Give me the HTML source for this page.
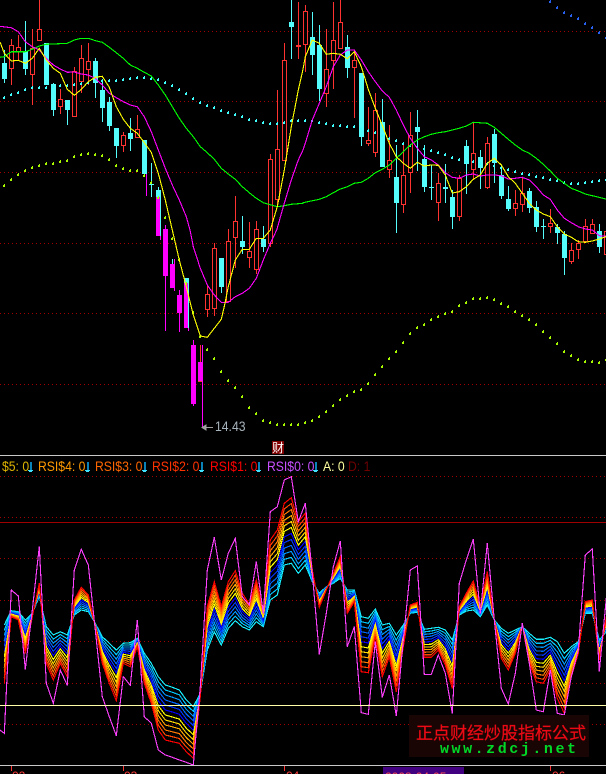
<!DOCTYPE html>
<html><head><meta charset="utf-8"><style>
html,body{margin:0;padding:0;background:#000;width:606px;height:774px;overflow:hidden}
svg{display:block;position:absolute;left:0;top:0}
text{font-family:"Liberation Sans","Noto Sans CJK SC",sans-serif}
</style></head><body>
<svg id="s" width="606" height="774" viewBox="0 0 606 774" xmlns="http://www.w3.org/2000/svg">
<g id="g" shape-rendering="crispEdges"></g>
<path d="M213 427.5H203M206 425L202 427.5L206 430Z" stroke="#a0a0a0" fill="#a0a0a0"/>
<text transform="translate(215,431) scale(1,1.1)" font-size="12.2" fill="#a8b4bc">14.43</text>
<rect x="272" y="441" width="12" height="13" fill="#800000"/>
<text x="272" y="452" font-size="12" fill="#fff">财</text>
<g font-size="12.2">
<text transform="translate(2,471) scale(1,1.15)" fill="#e0b400">$5: 0</text>
<text transform="translate(38,471) scale(1,1.15)" fill="#ff9900">RSI$4: 0</text>
<text transform="translate(95,471) scale(1,1.15)" fill="#ff6600">RSI$3: 0</text>
<text transform="translate(152,471) scale(1,1.15)" fill="#ff3300">RSI$2: 0</text>
<text transform="translate(210,471) scale(1,1.15)" fill="#ff0000">RSI$1: 0</text>
<text transform="translate(267,471) scale(1,1.15)" fill="#c850ff">RSI$0: 0</text>
<text transform="translate(323,471) scale(1,1.15)" fill="#ffffa0">A: 0</text>
<text transform="translate(348,471) scale(1,1.15)" fill="#700000">D: 1</text>
</g>
<g shape-rendering="crispEdges">
<path fill="#0a84b8" d="M30 462h2v8h-2zM87 462h2v8h-2zM144 462h2v8h-2zM201 462h2v8h-2zM258 462h2v8h-2zM315 462h2v8h-2z"/>
<path fill="#40e0ff" d="M28 470h5v1h-5zM29 471h3v1h-3zM85 470h5v1h-5zM86 471h3v1h-3zM142 470h5v1h-5zM143 471h3v1h-3zM199 470h5v1h-5zM200 471h3v1h-3zM256 470h5v1h-5zM257 471h3v1h-3zM313 470h5v1h-5zM314 471h3v1h-3z"/>
</g>
<rect x="409" y="715" width="180" height="42" fill="#1a0505"/>
<text x="416" y="739" font-size="17" fill="#f00a14" stroke="#d00a14" stroke-width=".3">正点财经炒股指标公式</text>
<text x="440" y="753" font-size="15" font-weight="bold" fill="#00d828" style="font-family:'Liberation Mono',monospace" textLength="136" lengthAdjust="spacing">www.zdcj.net</text>
<rect x="383" y="767" width="81" height="7" fill="#400080"/>
<g font-size="12" fill="#ff3c3c">
<text x="12" y="780">02</text><text x="124" y="780">03</text><text x="286" y="780">04</text><text x="552" y="780">06</text>
<text x="385" y="781" fill="#ff5050">2008-04-05</text>
</g>
</svg>
<script>
var h='';
function R(x,y,w,ht,c){h+='<rect x="'+x+'" y="'+y+'" width="'+w+'" height="'+ht+'" fill="'+c+'"/>';}
function D(y,c){h+='<path d="M0 '+(y+.5)+'H606" stroke="'+c+'" stroke-dasharray="1 3"/>';}
[31,101,172,243,313,384,476,517,558,600,641,683,724].forEach(function(y){D(y,'#a00000');});
var CY='#54fcfc',RD='#ff3232',MG='#ff00ff';
var C=[['c',50,63,79,83],['r',39,45,68,85],['r',35,47,51,60],['c',21,51,69,75],['r',29,48,74,105],['r',-2,29,40,40],['c',43,43,85,85],['c',83,84,110,116],['r',89,99,106,114],['c',100,100,110,125],['r',67,71,116,116],['r',45,58,81,93],['r',43,61,69,85],['c',58,61,83,98],['c',79,90,108,122],['c',97,102,126,131],['c',128,128,146,158],['r',132,135,145,152],['c',118,133,139,151],['r',115,129,137,137],['c',140,140,174,174],['c',163,184,185,197],['c',187,190,236,236],['m',225,229,276,331],['c',259,264,288,288],['m',290,295,313,332],['c',278,278,328,328],['m',340,345,404,406],['r',345,362,381,381],['r',285,294,309,317],['r',243,248,308,316],['c',258,258,287,293],['r',229,241,301,301],['r',196,221,237,268],['c',216,241,247,254],['r',222,251,257,268],['r',221,229,269,274],['c',226,239,247,252],['r',154,159,243,247],['r',90,149,199,205],['r',43,60,160,160],['c',0,22,27,59],['r',2,45,46,59],['r',5,11,44,72],['c',12,37,55,75],['c',25,45,89,101],['r',29,69,93,107],['r',2,40,60,89],['r',0,22,48,49],['c',35,47,68,78],['r',50,60,67,118],['c',73,73,137,146],['r',107,140,143,146],['r',93,110,152,157],['c',99,122,167,167],['r',125,160,169,178],['c',145,177,203,233],['r',145,175,204,213],['r',112,135,172,193],['c',110,127,132,171],['c',145,159,187,192],['c',165,187,188,200],['r',173,183,202,221],['c',164,187,189,203],['c',190,197,217,229],['r',175,178,216,221],['c',140,146,164,194],['r',123,153,169,180],['c',150,157,168,189],['r',137,143,187,189],['c',129,134,163,183],['c',166,175,196,199],['c',186,199,209,211],['r',190,203,208,216],['r',178,193,204,212],['c',188,191,208,213],['c',201,207,227,232],['c',219,226,227,239],['r',209,223,226,233],['c',224,227,233,244],['c',231,234,258,275],['r',243,250,261,264],['r',240,243,249,259],['r',219,226,241,241],['r',219,224,233,233],['c',224,231,247,253],['r',226,231,254,254]];
C.forEach(function(a,i){
 var x=2+7*i,t=a[0],hi=a[1],tp=a[2],bt=a[3],lo=a[4],c=t=='c'?CY:t=='r'?RD:MG;
 if(lo>hi)R(x+2,hi,1,lo-hi,c);
 if(t=='r'){R(x,tp,5,bt-tp+1,RD);R(x+1,tp+1,3,Math.max(bt-tp-1,0),'#000');}
 else R(x,tp,5,bt-tp,c);
});
R(144+2,174,1,22,MG);
R(156,197,4,39,MG);R(160,236,1,4,MG);
R(170,264,4,24,MG);R(174,259,1,32,MG);
R(184,283,4,45,MG);R(188,328,1,3,MG);
R(198,362,4,19,MG);R(202,345,1,82,MG);

function dots(a,ox,oy,c){a.forEach(function(p,i){if(i%2)return;
 var x=Math.round(a[i]/3+ox)-1,y=Math.round(a[i+1]/3+oy)-1;
 R(x,y+1,2,2,c);R(x+1,y,1,1,c);});}
dots([12,292,33,283,54,277,75,268,96,262,117,262,138,262,159,259,180,256,201,256,222,253,243,250,264,247,285,241,306,241,327,241,348,240,369,238,390,235,411,232,432,232,453,235,474,238,495,247,516,256,537,268,558,280,579,295,600,307,621,316,642,322,663,331,684,337,705,343,726,349,747,358,768,361,789,367,810,370,831,370,852,367,873,361,894,361],0,0,'#40ffff');
dots([5,361,26,361,47,367,68,370,89,376,110,376,131,379,152,379,173,385,194,391,215,397,236,406,257,415,278,421,299,430,320,436,341,439,362,445,383,451,404,457,425,463,446,472,467,478,488,484,509,484,530,490,551,490,572,496,593,502,614,508,635,514,656,520,677,523,698,529,719,532,740,538,761,541,782,547,803,550,824,550,845,547,866,544,887,541,908,538],303,0,'#40ffff');
dots([740,4,761,22,782,37,803,46,824,55,845,70,866,82,887,97,908,112],303,0,'#2860f0');
dots([12,556,33,538,54,523,75,511,96,502,117,496,138,490,159,490,180,484,201,481,222,469,243,463,264,460,285,463,306,466,327,478,348,496,369,505,390,511,411,511,432,526,453,547,474,592,495,652],0,0,'#a8f800');
dots([516,25,537,87,558,160,579,247,600,317,621,358,642,385,663,424,684,451,705,472,726,499,747,532,768,550,789,571,810,577,831,583,852,583,873,583,894,583],0,230,'#a8f800');
dots([5,577,26,571,47,559,68,544,89,526,110,508,131,496,152,484,173,478,194,460,215,433,236,409,257,385,278,364,299,337,320,310,341,292,362,283,383,268,404,259,425,250,446,244,467,226,488,217,509,205,530,205,551,202,572,208,593,220,614,229,635,244,656,256,677,268,698,283,719,304,740,322,761,340,782,364,803,376,824,388,845,394,866,394,887,397,908,388],303,230,'#a8f800');

function L(segs,c){var s='';segs.forEach(function(g){var a=g[2];for(var i=0;i<a.length;i+=2)s+=(a[i]/3+g[0]).toFixed(1)+','+(a[i+1]/3+g[1]).toFixed(1)+' ';});
 h+='<polyline fill="none" stroke-width="1.1" stroke="'+c+'" points="'+s+'"/>';}
L([[0,0,[0,172,13,170,34,155,76,155,97,148,118,138,139,133,160,132,202,130,223,120,244,115,265,115,286,122,307,127,328,142,349,158,370,175,391,195,412,205,433,217,454,228,475,255,496,285,517,320,538,355,559,385,580,410,601,440,622,458,643,478,664,505,685,522,706,538,727,560,748,578,769,595,790,608,811,614,832,620,853,617,874,613,909,610]],
[303,0,[0,608,49,598,70,590,91,578,112,567,133,560,154,550,175,547,196,535,217,518,238,508,259,495,280,475,301,455,322,435,343,420,364,410,385,403,406,398,427,395,448,390,469,385,490,378,511,367,553,370,574,382,595,400,616,418,637,435,658,450,679,460,700,475,721,493,742,513,763,535,784,550,805,565,826,573,847,582,868,587,909,597]]],'#00ff00');
L([[0,0,[0,79,34,83,55,95,76,125,97,140,118,150,139,175,160,195,181,207,202,217,223,216,244,222,265,225,286,235,307,255,328,280,349,293,370,305,391,315,412,320,433,350,454,395,475,450,496,505,517,555,538,600,559,650,570,690]],
[0,230,[580,50,601,115,622,165,643,195,664,217,685,217,706,200,727,190,748,175,769,145,790,90,811,40,830,0]],
[0,0,[853,610,874,540,895,480,909,450]],
[303,0,[7,430,28,360,49,310,70,260,91,200,112,165,133,150,154,150,175,180,196,215,217,245,238,273,259,292,280,330,301,375,322,415,343,445,364,470,385,480,406,495,427,518,448,532,469,535,490,525,511,522,532,528,553,525,574,525,595,527,616,537,637,535,658,532,679,540,700,560,721,585,742,598,763,630,784,655,805,668,826,680,847,687,868,690]],
[303,230,[889,17,909,19]]],'#ff00ff');
L([[0,0,[0,126,13,160,34,183,55,181,76,190,97,175,118,145,139,180,160,205,181,220,202,268,223,286,244,268,265,245,286,232,307,229,328,262,349,320,370,358,391,385,412,400,433,428,454,457,475,520,496,600,517,690]],
[0,230,[538,90,559,170,580,255,601,318,622,322,643,295,664,268,675,220,685,170,706,90,727,58,748,58,769,25,790,25,811,0]],
[0,0,[832,620,853,510,874,380,895,270,909,208]],
[303,0,[7,170,28,120,49,130,70,163,91,160,112,163,133,176,154,155,175,200,196,268,217,325,238,376,259,430,280,470,301,490,322,505,343,487,364,498,385,495,406,496,427,525,448,579,469,575,490,560,511,538,532,525,553,490,574,475,595,495,616,530,637,550,658,580,679,610,700,630,721,642,742,650,763,680,773,690]],
[303,230,[784,12,805,22,826,35,847,37,868,33,889,27,909,20]]],'#ffff00');

R(0,522,606,1,'#a00000');
var M=[850,420,438,658,480,290,700,760,660,706,360,298,345,540,740,800,857,680,706,510,800,820,900,915,922,930,937,945,710,360,262,390,310,265,440,465,335,490,185,170,90,80,215,160,370,613,490,350,273,590,530,788,793,575,742,675,797,570,360,348,673,673,615,670,790,400,330,267,490,280,510,715,762,670,520,640,780,785,660,790,795,680,600,315,297,665,445];
var K=[525,482,485,510,490,440,530,555,545,555,495,480,485,520,560,580,600,580,578,565,610,640,680,705,712,720,750,770,730,600,545,585,535,512,530,540,515,530,450,435,345,340,370,345,395,430,410,400,385,420,420,500,505,477,525,520,555,525,490,487,538,535,532,540,570,495,483,480,500,465,510,535,550,540,530,550,568,568,562,575,610,590,575,490,490,570,545];
var Q=[700,500,510,610,500,400,640,690,640,680,450,412,435,530,640,700,752,640,650,590,700,760,840,870,875,880,905,925,740,470,395,470,395,362,430,462,390,480,270,240,160,143,215,190,360,472,420,370,320,490,455,665,668,560,680,620,725,590,465,457,622,622,600,645,715,470,430,393,470,365,510,625,660,610,525,640,695,700,660,745,790,680,610,455,450,630,500];
var cols=['#18f0ff','#00c8ff','#0098ff','#0068ff','#0038ff','#0000ff','#ffff00','#ffd800','#ffa800','#ff7800','#ff4800','#ff0000'];
h+='<clipPath id="cp"><rect x="0" y="456" width="606" height="310"/></clipPath><g clip-path="url(#cp)">';
function PL(fn,c){var s='';for(var i=0;i<87;i++)s+=(4.33+7*i).toFixed(1)+','+(450+fn(i)/3).toFixed(1)+' ';
 h+='<polyline fill="none" stroke-width="1.15" stroke="'+c+'" points="'+s+'"/>';}
cols.forEach(function(c,k){var t=k/(cols.length-1);PL(function(i){return K[i]+(Q[i]-K[i])*t;},c);});
var ms='0,730 ';for(var i=0;i<87;i++)ms+=(4.33+7*i).toFixed(1)+','+(450+M[i]/3).toFixed(1)+' ';
h+='<polyline fill="none" stroke-width="1.1" stroke="#ff40ff" points="'+ms+'"/></g>';
R(0,705,606,1,'#ffffa8');
R(0,455,606,1,'#c8c8c8');R(0,765,606,1,'#c8c8c8');
[11,123,284,550].forEach(function(x){R(x,766,1,5,'#ff3232');});
document.getElementById('g').innerHTML=h;
</script>
</body></html>
